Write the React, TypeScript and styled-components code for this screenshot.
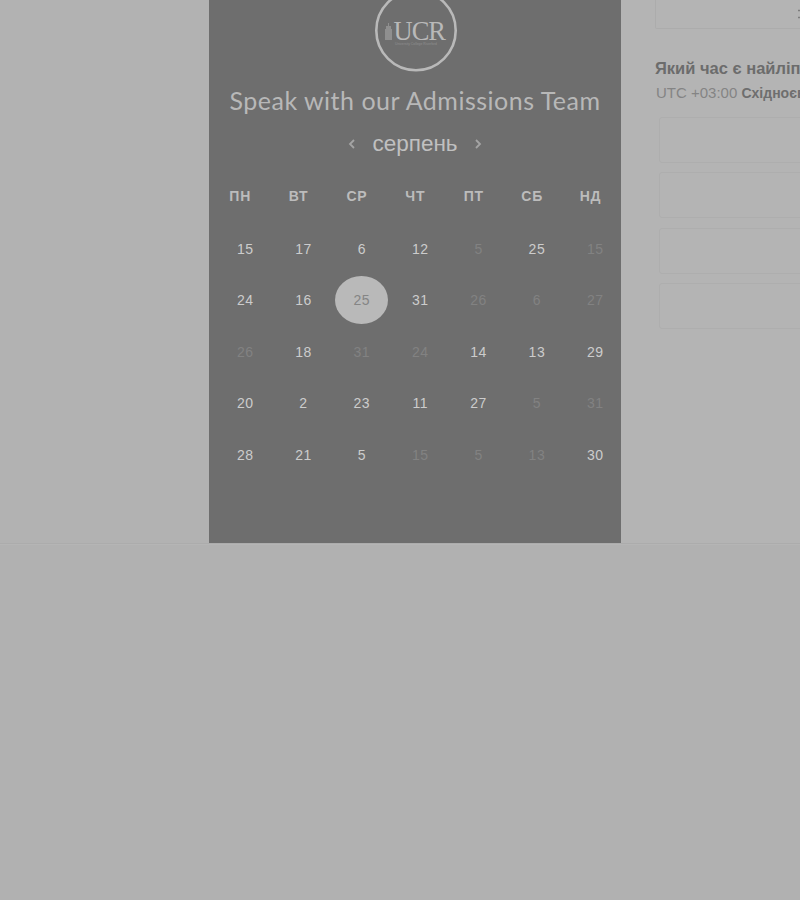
import styled, { createGlobalStyle } from "styled-components";

const GlobalStyle = createGlobalStyle`
  html, body {
    margin: 0;
    padding: 0;
    height: 100%;
    background: #b1b1b1;
    overflow: hidden;
  }
`;

const WEEKDAYS = ["пн", "вт", "ср", "чт", "пт", "сб", "нд"];

// d = day, m = muted, s = selected
const DAYS: { d: number; m?: boolean; s?: boolean }[] = [
  { d: 15 }, { d: 17 }, { d: 6 }, { d: 12 }, { d: 5, m: true }, { d: 25 }, { d: 15, m: true },
  { d: 24 }, { d: 16 }, { d: 25, s: true }, { d: 31 }, { d: 26, m: true }, { d: 6, m: true }, { d: 27, m: true },
  { d: 26, m: true }, { d: 18 }, { d: 31, m: true }, { d: 24, m: true }, { d: 14 }, { d: 13 }, { d: 29 },
  { d: 20 }, { d: 2 }, { d: 23 }, { d: 11 }, { d: 27 }, { d: 5, m: true }, { d: 31, m: true },
  { d: 28 }, { d: 21 }, { d: 5 }, { d: 15, m: true }, { d: 5, m: true }, { d: 13, m: true }, { d: 30 },
];

const Logo = () => (
  <LogoMark viewBox="0 0 82 82" role="img" aria-label="UCR">
    <circle cx="41" cy="40.5" r="39.7" fill="none" stroke="#b9b9b9" strokeWidth="2.6" />
    <path d="M10 50V39h1v-3h2v-3h1v3h2v3h1v11z" fill="#8f8f8f" />
    <LogoWord x="18.5" y="50">UCR</LogoWord>
    <LogoTag x="41" y="54.5">University College Riverford</LogoTag>
  </LogoMark>
);

export default function App() {
  return (
    <Page>
      <GlobalStyle />
      <Top>
        <Side />
        <Panel>
          <Logo />
          <Title>Speak with our Admissions Team</Title>
          <MonthRow>
            <Arrow viewBox="0 0 8 12">
              <path d="M6 2 2 6l4 4" />
            </Arrow>
            <Month>серпень</Month>
            <Arrow viewBox="0 0 8 12">
              <path d="m2 2 4 4-4 4" />
            </Arrow>
          </MonthRow>
          <Weekdays>
            {WEEKDAYS.map((w) => (
              <Weekday key={w}>{w}</Weekday>
            ))}
          </Weekdays>
          <Days>
            {DAYS.map((item, i) => (
              <Day key={i} $muted={item.m} $selected={item.s}>
                {item.d}
              </Day>
            ))}
          </Days>
        </Panel>
        <Right>
          <TopField>
            <FieldIcon viewBox="0 0 4 10">
              <path d="M1 1.5h3M1 8.5h3" />
            </FieldIcon>
          </TopField>
          <Question>Який час є найліпшим для дзвінка?</Question>
          <Zone>
            UTC +03:00 <ZoneName>Східноєвропейський час</ZoneName>
          </Zone>
          <Slots>
            <Slot />
            <Slot />
            <Slot />
            <Slot />
          </Slots>
        </Right>
      </Top>
    </Page>
  );
}

const Page = styled.div`
  width: 800px;
  height: 900px;
  overflow: hidden;
  font-family: "Liberation Sans", Arial, sans-serif;
`;

const Top = styled.div`
  display: flex;
  height: 543px;
  border-bottom: 1px solid #acacac;
  box-shadow: 0 1px 0 #b5b5b5;
`;

const Side = styled.div`
  flex: 0 0 209px;
  background: #b2b2b2;
`;

const Panel = styled.div`
  flex: 0 0 412px;
  height: 543px;
  background: #6e6e6e;
  display: flex;
  flex-direction: column;
  align-items: center;
  overflow: hidden;
`;

const LogoMark = styled.svg`
  flex: none;
  width: 82px;
  height: 82px;
  margin-top: -10px;
  margin-left: 1px;
`;

const LogoWord = styled.text`
  font-family: "Liberation Serif", serif;
  font-size: 26.5px;
  letter-spacing: -1px;
  fill: #b9b9b9;
`;

const LogoTag = styled.text`
  font-family: "Liberation Sans", sans-serif;
  font-size: 3.4px;
  text-anchor: middle;
  fill: #8f8f8f;
`;

const Title = styled.h1`
  margin: 13px 0 0;
  font-family: Lato, sans-serif;
  font-weight: 400;
  font-size: 25px;
  line-height: 30px;
  letter-spacing: 0.5px;
  color: #b8b8b8;
  white-space: nowrap;
`;

const MonthRow = styled.div`
  margin-top: 15px;
  height: 28px;
  display: flex;
  align-items: center;
  gap: 16px;
`;

const Month = styled.span`
  font-size: 22.5px;
  color: #c0c0c0;
  line-height: 28px;
`;

const Arrow = styled.svg`
  width: 8px;
  height: 12px;
  fill: none;
  stroke: #a4a4a4;
  stroke-width: 1.8;
`;

const Weekdays = styled.div`
  margin-top: 30px;
  width: 100%;
  box-sizing: border-box;
  padding-left: 2px;
  display: grid;
  grid-template-columns: repeat(7, 58.4px);
  justify-content: start;
`;

const Weekday = styled.span`
  font-size: 14px;
  line-height: 16px;
  font-weight: 700;
  letter-spacing: 0.8px;
  text-transform: uppercase;
  text-align: center;
  color: #bcbcbc;
`;

const Days = styled.div`
  margin-top: 19px;
  width: 100%;
  box-sizing: border-box;
  padding-left: 7px;
  display: grid;
  grid-template-columns: repeat(7, 58.35px);
  grid-auto-rows: 51.5px;
  justify-content: start;
`;

const Day = styled.span<{ $muted?: boolean; $selected?: boolean }>`
  justify-self: center;
  align-self: center;
  width: 53px;
  height: 48px;
  display: flex;
  align-items: center;
  justify-content: center;
  border-radius: 50%;
  font-size: 14px;
  letter-spacing: 0.5px;
  color: ${(p) => (p.$selected ? "#858585" : p.$muted ? "#828282" : "#cccccc")};
  background: ${(p) => (p.$selected ? "#b9b9b9" : "transparent")};
`;

const Right = styled.div`
  flex: 1;
  min-width: 0;
  padding-left: 34px;
  background: #b4b4b4;
  white-space: nowrap;
  overflow: hidden;
`;

const TopField = styled.div`
  width: 200px;
  height: 29px;
  box-sizing: border-box;
  padding: 9px 0 0 141px;
  border: 1px solid #acacac;
  border-top: 0;
  border-radius: 0 0 2px 2px;
`;

const FieldIcon = styled.svg`
  display: block;
  width: 4px;
  height: 10px;
  fill: none;
  stroke: #7c7c7c;
  stroke-width: 1.4;
`;

const Question = styled.div`
  margin-top: 30px;
  font-size: 16.5px;
  line-height: 18px;
  font-weight: 700;
  color: #6c6c6c;
`;

const Zone = styled.div`
  margin-top: 7px;
  margin-left: 1px;
  font-size: 15px;
  line-height: 18px;
  color: #848484;
`;

const ZoneName = styled.span`
  font-size: 14px;
  font-weight: 700;
  color: #6e6e6e;
`;

const Slots = styled.div`
  margin-top: 15px;
  margin-left: 4px;
  display: flex;
  flex-direction: column;
  gap: 9.4px;
`;

const Slot = styled.div`
  width: 200px;
  height: 46px;
  box-sizing: border-box;
  border: 1px solid #aeaeae;
  border-radius: 3px;
`;
